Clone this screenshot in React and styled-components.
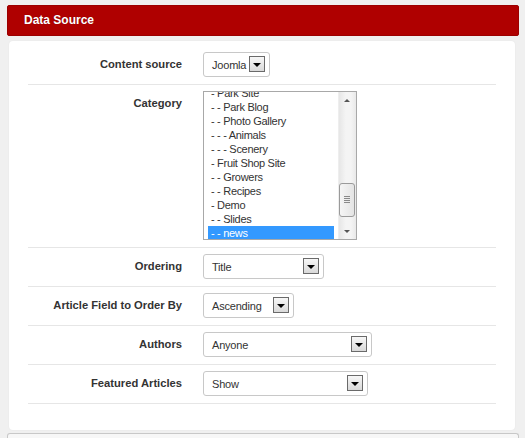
import React from "react";
import styled, { createGlobalStyle } from "styled-components";

const GlobalStyle = createGlobalStyle`
    html, body {
        margin: 0;
        padding: 0;
        background: #f0f0f0;
    }
    body {
        font-family: "Liberation Sans", Arial, sans-serif;
        color: #333;
    }
`;

const Page = styled.div`
    padding: 5px 6px 0 7px;
    width: 512px;
`;

const Header = styled.div`
    height: 29px;
    line-height: 29px;
    background: #af0000;
    border: 1px solid #9c0000;
    border-radius: 2px;
    padding-left: 16px;
    color: #fff;
    font-size: 12px;
    font-weight: bold;
    text-shadow: 0 0 1px rgba(0, 0, 0, 0.3);
`;

const Panel = styled.div`
    margin: 5px 4px 0 2px;
    padding: 5px 19px 26px 19px;
    background: #fff;
    border-radius: 4px;
    box-shadow: 0 0 2px rgba(0, 0, 0, 0.06);
`;

const Row = styled.div`
    display: flex;
    align-items: flex-start;
    gap: 21px;
    padding: 6px 0 7px;
    border-bottom: 1px solid #e6e6e6;
`;

const Label = styled.div`
    width: 154px;
    flex: none;
    text-align: right;
    line-height: 25px;
    font-size: 11.2px;
    font-weight: bold;
    color: #333;
`;

const SelectBox = styled.div`
    display: flex;
    align-items: center;
    box-sizing: border-box;
    width: ${(p) => p.$width}px;
    height: 25px;
    padding: 0 4px 0 8px;
    background: #fff;
    border: 1px solid #c8c8c8;
    border-radius: 3px;
    font-size: 11px;
    letter-spacing: -0.2px;
    color: #333;
`;

const SelectText = styled.span`
    flex: 1;
`;

const DropButton = styled.span`
    position: relative;
    flex: none;
    box-sizing: border-box;
    width: 16px;
    height: 16px;
    margin-top: -1px;
    border: 1px solid #6a6a6a;
    background: linear-gradient(#f7f7f7, #d9d9d9);

    &::after {
        content: "";
        position: absolute;
        left: 3px;
        top: 6px;
        border-left: 4px solid transparent;
        border-right: 4px solid transparent;
        border-top: 4px solid #000;
    }
`;

const ListBox = styled.div`
    display: flex;
    box-sizing: border-box;
    width: 154px;
    height: 149px;
    border: 1px solid #a8a8a8;
    background: #fff;
    overflow: hidden;
`;

const ListItems = styled.div`
    flex: 1;
    padding: 0 4px 0 4px;
    margin-top: -6px;
`;

const ListItem = styled.div`
    height: 14px;
    line-height: 14px;
    padding-left: 3px;
    font-size: 11px;
    letter-spacing: -0.3px;
    white-space: nowrap;
    color: ${(p) => (p.$selected ? "#fff" : "#333")};
    background: ${(p) => (p.$selected ? "#3399ff" : "transparent")};
`;

const ScrollBar = styled.div`
    position: relative;
    flex: none;
    width: 17px;
    background: linear-gradient(90deg, #e6e6e6, #f4f4f4 40%, #f4f4f4 70%, #e9e9e9);
    border-left: 1px solid #eee;
`;

const Arrow = styled.span`
    position: absolute;
    left: 5px;
    ${(p) => (p.$up ? "top: 7px;" : "bottom: 6px;")}
    border-left: 3px solid transparent;
    border-right: 3px solid transparent;
    ${(p) => (p.$up ? "border-bottom: 3px solid #555;" : "border-top: 3px solid #555;")}
`;

const Thumb = styled.div`
    position: absolute;
    left: 0;
    right: 1px;
    top: 91px;
    height: 34px;
    box-sizing: border-box;
    border: 1px solid #9a9a9a;
    border-radius: 3px;
    background: linear-gradient(90deg, #f5f5f5, #e4e4e4);

    &::after {
        content: "";
        position: absolute;
        left: 4px;
        right: 4px;
        top: 12px;
        height: 7px;
        background: repeating-linear-gradient(#8a8a8a 0 1px, transparent 1px 2px);
    }
`;

const BottomBox = styled.div`
    margin-top: 3px;
    height: 20px;
    background: #f7f7f7;
    border: 1px solid #c8c8c8;
    border-bottom: none;
    border-radius: 3px 3px 0 0;
`;

const Select = ({ value, width }) => (
    <SelectBox $width={width}>
        <SelectText>{value}</SelectText>
        <DropButton />
    </SelectBox>
);

const categories = [
    "- Park Site",
    "- - Park Blog",
    "- - Photo Gallery",
    "- - - Animals",
    "- - - Scenery",
    "- Fruit Shop Site",
    "- - Growers",
    "- - Recipes",
    "- Demo",
    "- - Slides",
    "- - news",
];

const fields = [
    { label: "Ordering", value: "Title", width: 121 },
    { label: "Article Field to Order By", value: "Ascending", width: 91 },
    { label: "Authors", value: "Anyone", width: 169 },
    { label: "Featured Articles", value: "Show", width: 165 },
];

const App = () => (
    <>
        <GlobalStyle />
        <Page>
            <Header>Data Source</Header>
            <Panel>
                <Row>
                    <Label>Content source</Label>
                    <Select value="Joomla" width={67} />
                </Row>
                <Row>
                    <Label>Category</Label>
                    <ListBox>
                        <ListItems>
                            {categories.map((item, index) => (
                                <ListItem key={index} $selected={index === categories.length - 1}>
                                    {item}
                                </ListItem>
                            ))}
                        </ListItems>
                        <ScrollBar>
                            <Arrow $up />
                            <Thumb />
                            <Arrow />
                        </ScrollBar>
                    </ListBox>
                </Row>
                {fields.map((field) => (
                    <Row key={field.label}>
                        <Label>{field.label}</Label>
                        <Select value={field.value} width={field.width} />
                    </Row>
                ))}
            </Panel>
            <BottomBox />
        </Page>
    </>
);

export default App;
